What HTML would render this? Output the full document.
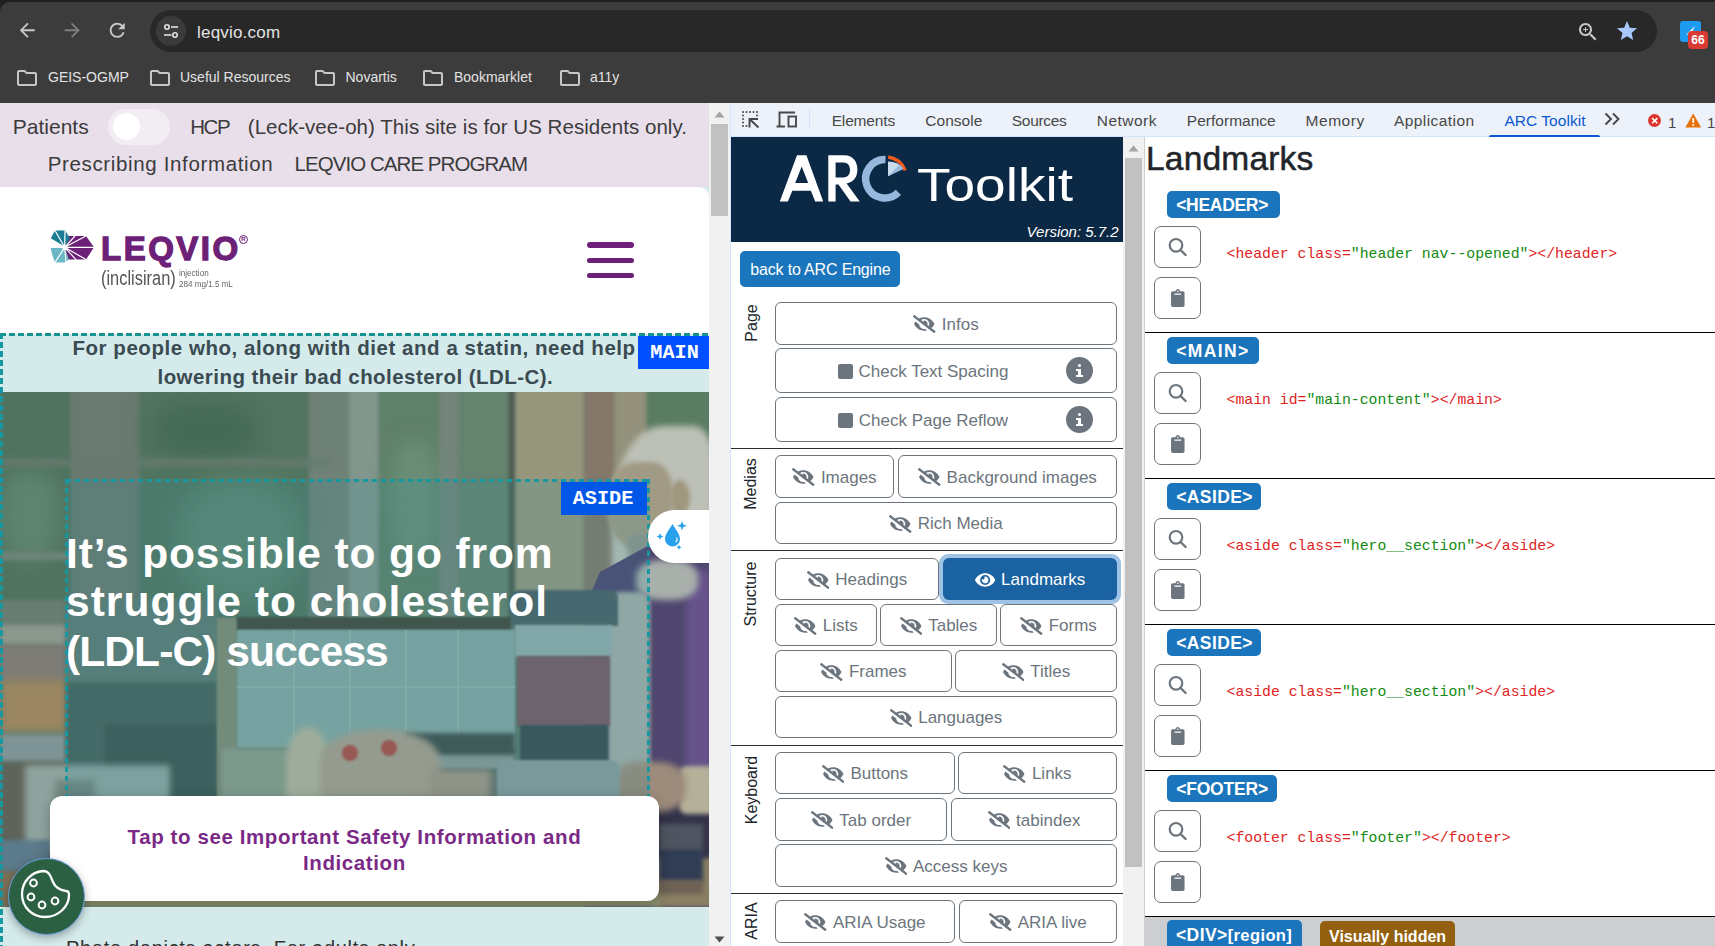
<!DOCTYPE html>
<html><head><meta charset="utf-8"><title>leqvio.com - ARC Toolkit</title>
<style>html,body{margin:0;padding:0;width:1715px;height:946px;overflow:hidden;position:relative;background:#fff;font-family:'Liberation Sans',sans-serif}</style>
</head><body>
<div style="position:absolute;left:0;top:0;width:1715px;height:103px;background:#1f2020"></div>
<div style="position:absolute;left:0;top:2px;width:1715px;height:101px;background:#3c3c3c;border-top-left-radius:10px"></div>
<div style="position:absolute;left:150px;top:10px;width:1507px;height:42px;border-radius:21px;background:#282828"></div>
<div style="position:absolute;left:156px;top:16px;width:30px;height:30px;border-radius:15px;background:#3b3b3b"></div>
<svg style="position:absolute;left:163px;top:23px" width="16" height="16" viewBox="0 0 16 16">
<circle cx="4" cy="4" r="2.2" fill="none" stroke="#e3e3e3" stroke-width="1.6"/><line x1="8" y1="4" x2="15" y2="4" stroke="#e3e3e3" stroke-width="1.6"/>
<circle cx="12" cy="12" r="2.2" fill="none" stroke="#e3e3e3" stroke-width="1.6"/><line x1="1" y1="12" x2="8.5" y2="12" stroke="#e3e3e3" stroke-width="1.6"/></svg>
<div style="position:absolute;left:197px;top:21px;font:17px/24px 'Liberation Sans',sans-serif;color:#e3e3e3;white-space:nowrap;letter-spacing:0.2px">leqvio.com</div>
<svg style="position:absolute;left:16px;top:19px" width="22.5" height="22.5" viewBox="0 0 24 24"><path d="M20 11H7.83l5.59-5.59L12 4l-8 8 8 8 1.41-1.41L7.83 13H20v-2z" fill="#c7c7c7"/></svg>
<svg style="position:absolute;left:61px;top:19px;transform:scaleX(-1)" width="22.5" height="22.5" viewBox="0 0 24 24"><path d="M20 11H7.83l5.59-5.59L12 4l-8 8 8 8 1.41-1.41L7.83 13H20v-2z" fill="#7d7d7d"/></svg>
<svg style="position:absolute;left:106px;top:19px" width="22.5" height="22.5" viewBox="0 0 24 24"><path d="M17.65 6.35C16.2 4.9 14.21 4 12 4c-4.42 0-7.99 3.58-7.99 8s3.57 8 7.99 8c3.73 0 6.84-2.55 7.73-6h-2.08c-.82 2.33-3.04 4-5.65 4-3.31 0-6-2.69-6-6s2.69-6 6-6c1.66 0 3.14.69 4.22 1.78L13 11h7V4l-2.35 2.35z" fill="#c7c7c7"/></svg>
<svg style="position:absolute;left:1575.5px;top:20px" width="24" height="24" viewBox="0 0 24 24"><path d="M15.5 14h-.79l-.28-.27C15.41 12.59 16 11.11 16 9.5 16 5.91 13.09 3 9.5 3S3 5.91 3 9.5 5.91 16 9.5 16c1.61 0 3.09-.59 4.23-1.57l.27.28v.79l5 4.99L20.49 19l-4.99-5zm-6 0C7.01 14 5 11.99 5 9.5S7.01 5 9.5 5 14 7.01 14 9.5 11.99 14 9.5 14zm2.5-4h-2v2H9v-2H7V9h2V7h1v2h2v1z" fill="#c7c7c7"/></svg>
<svg style="position:absolute;left:1615px;top:19px" width="24" height="24" viewBox="0 0 24 24"><path d="M12 17.27L18.18 21l-1.64-7.03L22 9.24l-7.19-.61L12 2 9.19 8.63 2 9.24l5.46 4.73L5.82 21z" fill="#a8c7fa"/></svg>
<div style="position:absolute;left:1680px;top:21px;width:21px;height:21px;border-radius:3px;background:#1d9bf0"></div>
<svg style="position:absolute;left:1684px;top:25px" width="12" height="12" viewBox="0 0 12 12"><path d="M11 1L2 10l3-1 1 2z" fill="#fff"/></svg>
<div style="position:absolute;left:1688px;top:31px;width:20px;height:18px;border-radius:4px;background:#d93a34;font:bold 12px/19px 'Liberation Sans',sans-serif;color:#fff;text-align:center">66</div>
<svg style="position:absolute;left:15px;top:66px" width="24" height="24" viewBox="0 0 24 24"><path d="M9.17 6l2 2H20v10H4V6h5.17M10 4H4c-1.1 0-1.99.9-1.99 2L2 18c0 1.1.9 2 2 2h16c1.1 0 2-.9 2-2V8c0-1.1-.9-2-2-2h-8l-2-2z" fill="#c7c7c7"/></svg>
<div style="position:absolute;left:48px;top:68px;font:14px/18px 'Liberation Sans',sans-serif;color:#e3e3e3;white-space:nowrap">GEIS-OGMP</div>
<svg style="position:absolute;left:148px;top:66px" width="24" height="24" viewBox="0 0 24 24"><path d="M9.17 6l2 2H20v10H4V6h5.17M10 4H4c-1.1 0-1.99.9-1.99 2L2 18c0 1.1.9 2 2 2h16c1.1 0 2-.9 2-2V8c0-1.1-.9-2-2-2h-8l-2-2z" fill="#c7c7c7"/></svg>
<div style="position:absolute;left:180px;top:68px;font:14px/18px 'Liberation Sans',sans-serif;color:#e3e3e3;white-space:nowrap">Useful Resources</div>
<svg style="position:absolute;left:313px;top:66px" width="24" height="24" viewBox="0 0 24 24"><path d="M9.17 6l2 2H20v10H4V6h5.17M10 4H4c-1.1 0-1.99.9-1.99 2L2 18c0 1.1.9 2 2 2h16c1.1 0 2-.9 2-2V8c0-1.1-.9-2-2-2h-8l-2-2z" fill="#c7c7c7"/></svg>
<div style="position:absolute;left:345.5px;top:68px;font:14px/18px 'Liberation Sans',sans-serif;color:#e3e3e3;white-space:nowrap">Novartis</div>
<svg style="position:absolute;left:421px;top:66px" width="24" height="24" viewBox="0 0 24 24"><path d="M9.17 6l2 2H20v10H4V6h5.17M10 4H4c-1.1 0-1.99.9-1.99 2L2 18c0 1.1.9 2 2 2h16c1.1 0 2-.9 2-2V8c0-1.1-.9-2-2-2h-8l-2-2z" fill="#c7c7c7"/></svg>
<div style="position:absolute;left:454px;top:68px;font:14px/18px 'Liberation Sans',sans-serif;color:#e3e3e3;white-space:nowrap">Bookmarklet</div>
<svg style="position:absolute;left:558px;top:66px" width="24" height="24" viewBox="0 0 24 24"><path d="M9.17 6l2 2H20v10H4V6h5.17M10 4H4c-1.1 0-1.99.9-1.99 2L2 18c0 1.1.9 2 2 2h16c1.1 0 2-.9 2-2V8c0-1.1-.9-2-2-2h-8l-2-2z" fill="#c7c7c7"/></svg>
<div style="position:absolute;left:590px;top:68px;font:14px/18px 'Liberation Sans',sans-serif;color:#e3e3e3;white-space:nowrap">a11y</div>
<div style="position:absolute;left:0px;top:103px;width:709px;height:843px;background:#d4eaeb"></div>
<div style="position:absolute;left:0px;top:103px;width:709px;height:84px;background:#e9dfeb"></div>
<div style="position:absolute;left:12.8px;top:116.2px;font:normal 21px/21px 'Liberation Sans',sans-serif;color:#3b3b3b;white-space:nowrap;">Patients</div>
<div style="position:absolute;left:108px;top:108.5px;width:62px;height:36px;background:#f2ecf3;border-radius:18px"></div>
<div style="position:absolute;left:112.8px;top:113px;width:27px;height:27px;background:#fff;border-radius:50%"></div>
<div style="position:absolute;left:190.3px;top:116.6px;font:normal 20.5px/20.5px 'Liberation Sans',sans-serif;color:#3b3b3b;white-space:nowrap;letter-spacing:-1.5px">HCP</div>
<div style="position:absolute;left:247.8px;top:116.6px;font:normal 20.5px/20.5px 'Liberation Sans',sans-serif;color:#3b3b3b;white-space:nowrap;letter-spacing:0.05px">(Leck-vee-oh) This site is for US Residents only.</div>
<div style="position:absolute;left:47.7px;top:154.1px;font:normal 20.5px/20.5px 'Liberation Sans',sans-serif;color:#3b3b3b;white-space:nowrap;letter-spacing:0.65px">Prescribing Information</div>
<div style="position:absolute;left:294.6px;top:154.1px;font:normal 20.5px/20.5px 'Liberation Sans',sans-serif;color:#3b3b3b;white-space:nowrap;letter-spacing:-0.95px">LEQVIO CARE PROGRAM</div>
<div style="position:absolute;left:0px;top:187px;width:709px;height:147px;background:#fff;border-radius:0 10px 0 0"></div>
<svg style="position:absolute;left:48px;top:228px" width="48" height="36" viewBox="48 228 48 36">
<path d="M66 236 L86 236 L94 247.3 L86 259.6 L66 259.6 L64.7 247.3z" fill="#6d2077"/>
<path d="M55 230.5 L65 230.5 L70 238 L64.7 247.3 L50.5 238.8z" fill="#1b7d95"/>
<path d="M50.5 247.3 L64.7 247.3 L69 259.6 L64.7 262.5 L55 262.5 L52 254z" fill="#6ab8c6"/>
<g stroke="#fff" stroke-width="1.2"><path d="M64.7 247.3L50.5 238.8M64.7 247.3L55 230.5M64.7 247.3L65 230.5M64.7 247.3L86 236M64.7 247.3L94 247.3M64.7 247.3L86 259.6M64.7 247.3L66 262M64.7 247.3L55 262.5M64.7 247.3L50.5 247.3M64.7 247.3L75 236M64.7 247.3L76 259.6"/></g>
<circle cx="64.7" cy="247.3" r="2.6" fill="#fff"/></svg>
<div style="position:absolute;left:101.0px;top:231.7px;font:bold 33px/33px 'Liberation Sans',sans-serif;color:#6d2077;white-space:nowrap;letter-spacing:2.5px;-webkit-text-stroke:1.3px #6d2077">LEQVIO</div>
<div style="position:absolute;left:239px;top:235px;width:9px;height:9px;border-radius:50%;border:1.3px solid #6d2077;box-sizing:border-box;font:bold 6px/6.4px 'Liberation Sans';color:#6d2077;text-align:center">R</div>
<div style="position:absolute;left:101.0px;top:268.1px;font:normal 20px/20px 'Liberation Sans',sans-serif;color:#555;white-space:nowrap;transform:scaleX(0.82);transform-origin:0 0">(inclisiran)</div>
<div style="position:absolute;left:179.0px;top:267.5px;font:normal 9.5px/9.5px 'Liberation Sans',sans-serif;color:#666;white-space:nowrap;transform:scaleX(0.85);transform-origin:0 0">injection</div>
<div style="position:absolute;left:179.0px;top:279.0px;font:normal 9.5px/9.5px 'Liberation Sans',sans-serif;color:#666;white-space:nowrap;transform:scaleX(0.85);transform-origin:0 0">284 mg/1.5 mL</div>
<div style="position:absolute;left:587px;top:242px;width:47px;height:5.5px;background:#6d2077;border-radius:3px"></div>
<div style="position:absolute;left:587px;top:257.5px;width:47px;height:5.5px;background:#6d2077;border-radius:3px"></div>
<div style="position:absolute;left:587px;top:272.5px;width:47px;height:5.5px;background:#6d2077;border-radius:3px"></div>
<div style="position:absolute;left:0px;top:336px;width:709px;height:56px;background:#d4eaeb"></div>
<div style="position:absolute;left:72.4px;top:337.6px;font:bold 20.5px/20.5px 'Liberation Sans',sans-serif;color:#3a4b52;white-space:nowrap;letter-spacing:0.55px">For people who, along with diet and a statin, need help</div>
<div style="position:absolute;left:157.5px;top:366.6px;font:bold 20.5px/20.5px 'Liberation Sans',sans-serif;color:#3a4b52;white-space:nowrap;letter-spacing:0.45px">lowering their bad cholesterol (LDL-C).</div>
<div style="position:absolute;left:0;top:392px;width:709px;height:515px;overflow:hidden;background:#5f7d6e">
<div style="position:absolute;left:-1px;top:-12px;width:74px;height:245px;background:#4f735f;border-radius:0;filter:blur(2px);"></div>
<div style="position:absolute;left:71px;top:-12px;width:70px;height:245px;background:#6b7a70;border-radius:0;filter:blur(2px);"></div>
<div style="position:absolute;left:139px;top:-12px;width:172px;height:245px;background:#527561;border-radius:0;filter:blur(2px);"></div>
<div style="position:absolute;left:309px;top:-12px;width:42px;height:245px;background:#6f8277;border-radius:0;filter:blur(2px);"></div>
<div style="position:absolute;left:349px;top:-12px;width:32px;height:245px;background:#82968d;border-radius:0;filter:blur(2px);"></div>
<div style="position:absolute;left:379px;top:-12px;width:62px;height:245px;background:#5f8069;border-radius:0;filter:blur(2px);"></div>
<div style="position:absolute;left:439px;top:-12px;width:22px;height:245px;background:#74857b;border-radius:0;filter:blur(2px);"></div>
<div style="position:absolute;left:459px;top:-12px;width:52px;height:245px;background:#66836f;border-radius:0;filter:blur(2px);"></div>
<div style="position:absolute;left:509px;top:-12px;width:8px;height:245px;background:#48584e;border-radius:0;filter:blur(2px);"></div>
<div style="position:absolute;left:515px;top:-12px;width:71px;height:245px;background:#96967d;border-radius:0;filter:blur(2px);"></div>
<div style="position:absolute;left:584px;top:-12px;width:32px;height:245px;background:#85776a;border-radius:0;filter:blur(2px);"></div>
<div style="position:absolute;left:614px;top:-12px;width:35px;height:245px;background:#93917b;border-radius:0;filter:blur(2px);"></div>
<div style="position:absolute;left:647px;top:-12px;width:63px;height:245px;background:#5a7d62;border-radius:0;filter:blur(2px);"></div>
<div style="position:absolute;left:150px;top:8px;width:110px;height:60px;background:#456b56;border-radius:40%;filter:blur(12px);"></div>
<div style="position:absolute;left:0px;top:78px;width:60px;height:90px;background:#5d8470;border-radius:40%;filter:blur(10px);"></div>
<div style="position:absolute;left:180px;top:88px;width:120px;height:120px;background:#5f8672;border-radius:40%;filter:blur(14px);"></div>
<div style="position:absolute;left:390px;top:48px;width:50px;height:120px;background:#6a8d77;border-radius:40%;filter:blur(10px);"></div>
<div style="position:absolute;left:0px;top:67px;width:330px;height:7px;background:#667b70;border-radius:0;filter:blur(3px);"></div>
<div style="position:absolute;left:0px;top:160px;width:72px;height:8px;background:#6f8479;border-radius:0;filter:blur(2px);"></div>
<div style="position:absolute;left:0px;top:208px;width:66px;height:28px;background:#687d72;border-radius:0;filter:blur(2px);"></div>
<div style="position:absolute;left:0px;top:233px;width:66px;height:20px;background:#8b978d;border-radius:0;filter:blur(2px);"></div>
<div style="position:absolute;left:0px;top:253px;width:66px;height:37px;background:#7d7c76;border-radius:0;filter:blur(2px);"></div>
<div style="position:absolute;left:0px;top:288px;width:68px;height:52px;background:#9a8660;border-radius:0;filter:blur(4px);"></div>
<div style="position:absolute;left:0px;top:343px;width:66px;height:27px;background:#7f9497;border-radius:0;filter:blur(2px);"></div>
<div style="position:absolute;left:0px;top:370px;width:66px;height:145px;background:#5e645a;border-radius:0;filter:blur(2px);"></div>
<div style="position:absolute;left:66px;top:208px;width:151px;height:82px;background:#5f7b74;border-radius:0;filter:blur(2px);"></div>
<div style="position:absolute;left:66px;top:290px;width:151px;height:118px;background:#4a625c;border-radius:0;filter:blur(2px);"></div>
<div style="position:absolute;left:105px;top:333px;width:112px;height:75px;background:#3f5650;border-radius:0;filter:blur(2px);"></div>
<div style="position:absolute;left:217px;top:226px;width:20px;height:182px;background:#838a74;border-radius:0;filter:blur(1px);"></div>
<div style="position:absolute;left:237px;top:225px;width:274px;height:13px;background:#464b3e;border-radius:0;filter:blur(1px);"></div>
<div style="position:absolute;left:237px;top:238px;width:278px;height:118px;background:#86a6a2;border-radius:0;filter:blur(1px);"></div>
<div style="position:absolute;left:293px;top:238px;width:2px;height:110px;background:#93aeaa;border-radius:0;"></div>
<div style="position:absolute;left:349px;top:238px;width:2px;height:110px;background:#93aeaa;border-radius:0;"></div>
<div style="position:absolute;left:405px;top:238px;width:2px;height:110px;background:#93aeaa;border-radius:0;"></div>
<div style="position:absolute;left:457px;top:238px;width:2px;height:110px;background:#93aeaa;border-radius:0;"></div>
<div style="position:absolute;left:237px;top:294px;width:278px;height:2px;background:#93aeaa;border-radius:0;"></div>
<div style="position:absolute;left:222px;top:356px;width:78px;height:52px;background:#8d9a88;border-radius:0;filter:blur(2px);"></div>
<div style="position:absolute;left:405px;top:341px;width:110px;height:39px;background:#43504d;border-radius:0;filter:blur(2px);"></div>
<div style="position:absolute;left:405px;top:363px;width:110px;height:15px;background:#8b9895;border-radius:0;filter:blur(2px);"></div>
<div style="position:absolute;left:405px;top:380px;width:110px;height:28px;background:#6d736a;border-radius:0;filter:blur(2px);"></div>
<div style="position:absolute;left:25px;top:373px;width:145px;height:87px;background:#8fa49f;border-radius:0;filter:blur(3px);"></div>
<div style="position:absolute;left:55px;top:388px;width:40px;height:70px;background:#72857f;border-radius:0;filter:blur(3px);"></div>
<div style="position:absolute;left:0px;top:448px;width:50px;height:32px;background:#5b7a8a;border-radius:0;filter:blur(2px);"></div>
<div style="position:absolute;left:0px;top:480px;width:50px;height:35px;background:#7d7058;border-radius:0;filter:blur(2px);"></div>
<div style="position:absolute;left:286px;top:335px;width:44px;height:73px;background:#b6b39a;border-radius:50% 50% 0 0;filter:blur(3px);"></div>
<div style="position:absolute;left:320px;top:338px;width:120px;height:70px;background:#ab9d8b;border-radius:45% 45% 10% 10%;filter:blur(3px);"></div>
<div style="position:absolute;left:430px;top:378px;width:60px;height:30px;background:#a39482;border-radius:0;filter:blur(3px);"></div>
<div style="position:absolute;left:342px;top:353px;width:16px;height:16px;background:#b04c44;border-radius:50%;filter:blur(1px);"></div>
<div style="position:absolute;left:381px;top:348px;width:16px;height:16px;background:#b04c44;border-radius:50%;filter:blur(1px);"></div>
<div style="position:absolute;left:612px;top:34px;width:102px;height:174px;background:#bcc0b6;border-radius:50% 20% 0 0;filter:blur(3px);"></div>
<div style="position:absolute;left:606px;top:70px;width:66px;height:88px;background:#a19a84;border-radius:45% 30% 40% 50%;filter:blur(2px);"></div>
<div style="position:absolute;left:670px;top:88px;width:20px;height:35px;background:#a0977f;border-radius:50%;filter:blur(2px);"></div>
<div style="position:absolute;left:628px;top:143px;width:62px;height:60px;background:#8f948d;border-radius:0;filter:blur(3px);"></div>
<div style="position:absolute;left:0;top:0;width:709px;height:515px;background:#4f466f;clip-path:polygon(655px 150px,700px 165px,720px 175px,720px 515px,585px 515px,585px 215px,600px 180px)"></div>
<div style="position:absolute;left:686px;top:178px;width:26px;height:210px;background:#66538a;border-radius:0;filter:blur(3px);"></div>
<div style="position:absolute;left:608px;top:200px;width:42px;height:198px;background:#a5aca7;border-radius:12px 12px 0 0;filter:blur(2px);"></div>
<div style="position:absolute;left:636px;top:168px;width:62px;height:40px;background:#a9b0ab;border-radius:40%;filter:blur(3px);"></div>
<div style="position:absolute;left:650px;top:398px;width:62px;height:80px;background:#34334a;border-radius:0;filter:blur(2px);"></div>
<div style="position:absolute;left:679px;top:374px;width:33px;height:48px;background:#b5b09a;border-radius:8px 0 0 8px;filter:blur(2px);"></div>
<div style="position:absolute;left:616px;top:370px;width:70px;height:50px;background:#9d8c7b;border-radius:30% 40% 40% 30%;filter:blur(3px);"></div>
<div style="position:absolute;left:511px;top:198px;width:107px;height:36px;background:#4e6064;border-radius:8px 8px 0 0;filter:blur(1px);"></div>
<div style="position:absolute;left:515px;top:233px;width:97px;height:32px;background:#95abab;border-radius:0;filter:blur(1px);"></div>
<div style="position:absolute;left:517px;top:264px;width:93px;height:70px;background:#7a5a63;border-radius:0;filter:blur(1px);"></div>
<div style="position:absolute;left:520px;top:333px;width:88px;height:37px;background:#3d4d51;border-radius:0;filter:blur(1px);"></div>
<div style="position:absolute;left:497px;top:368px;width:123px;height:38px;background:#8a9b9a;border-radius:10px 10px 0 0;filter:blur(1px);"></div>
<div style="position:absolute;left:655px;top:466px;width:57px;height:49px;background:#8a7f63;border-radius:0;filter:blur(2px);"></div>
<div style="position:absolute;left:659px;top:432px;width:44px;height:28px;background:#4f5560;border-radius:0;filter:blur(2px);"></div>
<div style="position:absolute;left:659px;top:458px;width:44px;height:32px;background:#303d55;border-radius:0;filter:blur(2px);"></div>
<div style="position:absolute;left:659px;top:488px;width:44px;height:14px;background:#6d6255;border-radius:0;filter:blur(2px);"></div>
<div style="position:absolute;left:50px;top:503px;width:610px;height:12px;background:#8c9570;border-radius:0;filter:blur(2px);"></div>
</div>
<div style="position:absolute;left:66px;top:479px;width:584px;height:317px;background:rgba(40,150,160,0.17)"></div>
<div style="position:absolute;left:66.0px;top:533.0px;font:bold 42.5px/42.5px 'Liberation Sans',sans-serif;color:#fff;white-space:nowrap;letter-spacing:0.9px">It&rsquo;s possible to go from</div>
<div style="position:absolute;left:66.0px;top:581.0px;font:bold 42.5px/42.5px 'Liberation Sans',sans-serif;color:#fff;white-space:nowrap;letter-spacing:1.04px">struggle to cholesterol</div>
<div style="position:absolute;left:66.0px;top:630.5px;font:bold 42.5px/42.5px 'Liberation Sans',sans-serif;color:#fff;white-space:nowrap;letter-spacing:-0.9px">(LDL-C) success</div>
<div style="position:absolute;left:0px;top:333px;width:709px;height:3px;background:repeating-linear-gradient(90deg,#17938f 0 6px,transparent 6px 9px)"></div>
<div style="position:absolute;left:0px;top:333px;width:3px;height:613px;background:repeating-linear-gradient(180deg,#17979f 0 6px,transparent 6px 9px)"></div>
<div style="position:absolute;left:66px;top:479px;width:584px;height:2.5px;background:repeating-linear-gradient(90deg,#17979f 0 5px,transparent 5px 9px)"></div>
<div style="position:absolute;left:647px;top:479px;width:3px;height:317px;background:repeating-linear-gradient(180deg,#17979f 0 5px,transparent 5px 9px)"></div>
<div style="position:absolute;left:65px;top:479px;width:2.5px;height:317px;background:repeating-linear-gradient(180deg,#17979f 0 5px,transparent 5px 9px)"></div>
<div style="position:absolute;left:638px;top:336px;width:71px;height:33px;background:#0050ff"></div>
<div style="position:absolute;left:650.3px;top:342.5px;font:bold 20.2px/20.2px 'Liberation Mono',monospace;color:#fff;white-space:nowrap;">MAIN</div>
<div style="position:absolute;left:561px;top:482px;width:86px;height:33px;background:#0057e7"></div>
<div style="position:absolute;left:572.7px;top:488.5px;font:bold 20.2px/20.2px 'Liberation Mono',monospace;color:#fff;white-space:nowrap;">ASIDE</div>
<div style="position:absolute;left:648px;top:510px;width:61px;height:53px;background:#fff;border-radius:26.5px 0 0 26.5px"></div>
<svg style="position:absolute;left:653px;top:520px" width="40" height="34" viewBox="0 0 40 34">
<path d="M19.5 4 C16 10 12 14 12 19 A7.5 7.5 0 0 0 27 19 C27 14 23 10 19.5 4z" fill="#28a0ec"/>
<path d="M23.5 17.5 A3 3 0 0 1 22.5 22" stroke="#fff" stroke-width="1.2" fill="none"/>
<path d="M7 13 L8 15.5 10.5 16.5 8 17.5 7 20 6 17.5 3.5 16.5 6 15.5z" fill="#28a0ec"/>
<path d="M29 1 L30.3 4.5 34 5.8 30.3 7.1 29 10.6 27.7 7.1 24 5.8 27.7 4.5z" fill="#28a0ec"/>
<path d="M26 24.5 L26.8 26.4 28.7 27.2 26.8 28 26 29.9 25.2 28 23.3 27.2 25.2 26.4z" fill="#28a0ec"/></svg>
<div style="position:absolute;left:50px;top:796px;width:609px;height:105px;background:#fff;border-radius:12px;box-shadow:0 4px 14px rgba(0,0,0,0.25)"></div>
<div style="position:absolute;left:-145.6px;width:1000px;text-align:center;top:826.6px;font:bold 20.5px/20.5px 'Liberation Sans',sans-serif;color:#7a2a86;white-space:nowrap;letter-spacing:0.6px">Tap to see Important Safety Information and</div>
<div style="position:absolute;left:-145.6px;width:1000px;text-align:center;top:852.9px;font:bold 20.5px/20.5px 'Liberation Sans',sans-serif;color:#7a2a86;white-space:nowrap;letter-spacing:0.6px">Indication</div>
<div style="position:absolute;left:3px;top:907px;width:706px;height:39px;background:#d4eaeb"></div>
<div style="position:absolute;left:66.0px;top:938.1px;font:normal 20px/20px 'Liberation Sans',sans-serif;color:#333;white-space:nowrap;letter-spacing:0.7px">Photo depicts actors. For adults only.</div>
<div style="position:absolute;left:7.5px;top:857.5px;width:77px;height:77px;background:#2b6043;border-radius:50%;box-sizing:border-box;border:1px solid #6aa0dd;box-shadow:0 3px 8px rgba(0,0,0,0.3)"></div>
<svg style="position:absolute;left:19px;top:868px" width="55" height="55" viewBox="0 0 55 55">
<path d="M24 3 C12 4 3 14 3 26 C3 39 13 49 26 49 C39 49 50 39 50 27 C50 25 49 23 47 23 C41 22 36 19 34 14 C32 10 31 3 24 3z" stroke="#fff" stroke-width="2.3" fill="none"/>
<circle cx="14.5" cy="15" r="3.4" stroke="#fff" stroke-width="2" fill="none"/>
<circle cx="12" cy="29" r="3.4" stroke="#fff" stroke-width="2" fill="none"/>
<circle cx="23" cy="37" r="3.4" stroke="#fff" stroke-width="2" fill="none"/>
<circle cx="36" cy="33" r="3.4" stroke="#fff" stroke-width="2" fill="none"/></svg>
<div style="position:absolute;left:709px;top:103px;width:21px;height:843px;background:#f1f1f1"></div>
<div style="position:absolute;left:711px;top:124px;width:17px;height:92px;background:#c1c1c1"></div>
<svg style="position:absolute;left:714px;top:111px" width="11" height="7" viewBox="0 0 11 7"><path d="M0.5 6.5L5.5 0.5 10.5 6.5z" fill="#a3a3a3"/></svg>
<svg style="position:absolute;left:714px;top:936px" width="11" height="7" viewBox="0 0 11 7"><path d="M0.5 0.5L5.5 6.5 10.5 0.5z" fill="#505050"/></svg>
<div style="position:absolute;left:730px;top:103px;width:985px;height:34px;background:#edf2fa"></div>
<div style="position:absolute;left:730px;top:136px;width:985px;height:1px;background:#d3e3fd"></div>
<div style="position:absolute;left:730px;top:103px;width:1px;height:843px;background:#d3e3fd"></div>
<svg style="position:absolute;left:742px;top:111px" width="18" height="18" viewBox="0 0 18 18">
<g fill="#474747"><circle cx="1" cy="1" r="1"/><circle cx="4.5" cy="1" r="1"/><circle cx="8" cy="1" r="1"/><circle cx="11.5" cy="1" r="1"/><circle cx="15" cy="1" r="1"/>
<circle cx="1" cy="4.5" r="1"/><circle cx="1" cy="8" r="1"/><circle cx="1" cy="11.5" r="1"/><circle cx="1" cy="15" r="1"/><circle cx="4.5" cy="15" r="1"/><circle cx="15" cy="4.5" r="1"/></g>
<path d="M7.5 16.5V8H16M8 8.5l8.5 8" stroke="#474747" stroke-width="1.9" fill="none"/></svg>
<svg style="position:absolute;left:776px;top:111px" width="22" height="17" viewBox="0 0 22 17">
<path d="M3.5 15V1.5H19" stroke="#474747" stroke-width="1.9" fill="none"/><path d="M0.5 15.5H9" stroke="#474747" stroke-width="2" fill="none"/>
<rect x="12.5" y="5.5" width="7.5" height="10" stroke="#474747" stroke-width="1.9" fill="none"/></svg>
<div style="position:absolute;left:809px;top:109px;width:1px;height:19px;background:#d3e3fd"></div>
<div style="position:absolute;left:831.7px;top:112.9px;font:normal 15.5px/15.5px 'Liberation Sans',sans-serif;color:#474747;white-space:nowrap;letter-spacing:-0.16px">Elements</div>
<div style="position:absolute;left:925.3px;top:112.9px;font:normal 15.5px/15.5px 'Liberation Sans',sans-serif;color:#474747;white-space:nowrap;letter-spacing:0.03px">Console</div>
<div style="position:absolute;left:1011.8px;top:112.9px;font:normal 15.5px/15.5px 'Liberation Sans',sans-serif;color:#474747;white-space:nowrap;letter-spacing:-0.3px">Sources</div>
<div style="position:absolute;left:1096.7px;top:112.9px;font:normal 15.5px/15.5px 'Liberation Sans',sans-serif;color:#474747;white-space:nowrap;letter-spacing:0.5px">Network</div>
<div style="position:absolute;left:1186.8px;top:112.9px;font:normal 15.5px/15.5px 'Liberation Sans',sans-serif;color:#474747;white-space:nowrap;letter-spacing:0.02px">Performance</div>
<div style="position:absolute;left:1305.5px;top:112.9px;font:normal 15.5px/15.5px 'Liberation Sans',sans-serif;color:#474747;white-space:nowrap;letter-spacing:0.55px">Memory</div>
<div style="position:absolute;left:1394.0px;top:112.9px;font:normal 15.5px/15.5px 'Liberation Sans',sans-serif;color:#474747;white-space:nowrap;letter-spacing:0.43px">Application</div>
<div style="position:absolute;left:1504.4px;top:112.9px;font:normal 15.5px/15.5px 'Liberation Sans',sans-serif;color:#0b57d0;white-space:nowrap;letter-spacing:0.04px">ARC Toolkit</div>
<div style="position:absolute;left:1489px;top:134.5px;width:110.5px;height:2.5px;background:#0b57d0;border-radius:2px 2px 0 0"></div>
<svg style="position:absolute;left:1604px;top:112px" width="17" height="14" viewBox="0 0 17 14"><path d="M1.5 1.5L7 7l-5.5 5.5M9 1.5L14.5 7 9 12.5" stroke="#474747" stroke-width="1.9" fill="none"/></svg>
<div style="position:absolute;left:1647.8px;top:113.7px;width:13.4px;height:13.4px;border-radius:50%;background:#dc362e"></div>
<svg style="position:absolute;left:1647.8px;top:113.7px" width="13.4" height="13.4" viewBox="0 0 14 14"><path d="M4.3 4.3l5.4 5.4M9.7 4.3l-5.4 5.4" stroke="#fff" stroke-width="1.7"/></svg>
<div style="position:absolute;left:1668.0px;top:115.3px;font:normal 15px/15px 'Liberation Sans',sans-serif;color:#474747;white-space:nowrap;">1</div>
<svg style="position:absolute;left:1684.5px;top:113px" width="16.5" height="15" viewBox="0 0 16.5 15"><path d="M8.25 0.5L16.2 14.5H0.3z" fill="#e8710a"/><rect x="7.4" y="5" width="1.7" height="5" fill="#fff"/><rect x="7.4" y="11.2" width="1.7" height="1.7" fill="#fff"/></svg>
<div style="position:absolute;left:1707.0px;top:115.3px;font:normal 15px/15px 'Liberation Sans',sans-serif;color:#474747;white-space:nowrap;">1</div>
<div style="position:absolute;left:731px;top:137px;width:392px;height:809px;background:#fff"></div>
<div style="position:absolute;left:731px;top:137px;width:392px;height:105px;background:#0b2945"></div>
<svg style="position:absolute;left:731px;top:137px" width="392" height="105" viewBox="731 137 392 105">
<path fill="#fff" fill-rule="evenodd" d="M779.8 201.4 L797 155.3 L806.4 155.3 L823.2 201.4 L815.2 201.4 L810.9 190.7 L792.3 190.7 L787.9 201.4z M795.2 183 L808.2 183 L801.7 166.5z"/>
<path fill="#fff" fill-rule="evenodd" d="M828.3 201.4 L828.3 155.3 L844 155.3 C853 155.3 857.4 161.5 857.4 169.8 C857.4 177 853.5 182.2 846.6 183.6 L859.8 201.4 L850.5 201.4 L838.5 184.4 L835.6 184.4 L835.6 201.4z M835.6 162.6 L835.6 177.4 L843.5 177.4 C847.8 177.4 850 174.4 850 170 C850 165.6 847.8 162.6 843.5 162.6z"/>
<path d="M885.5 159.6 A19.2 19.2 0 1 0 898.4 192.4" stroke="#95b8dc" stroke-width="7.5" fill="none"/>
<path d="M888.2 157 A22 22 0 0 1 905.2 170.4" stroke="#f05a1a" stroke-width="3.3" fill="none"/>
<path d="M888 161.5 L888 176.2 L903.4 168.8 A19 19 0 0 0 888 161.5z" fill="#c9dcef"/>
<path d="M888 176.2 L903.4 168.8 L900 164.5z" fill="#95b8dc"/>
<text x="917" y="200.8" font-family="Liberation Sans" font-size="47" fill="#fff" textLength="156" lengthAdjust="spacingAndGlyphs">Toolkit</text>
</svg>
<div style="position:absolute;left:1026.6px;top:224.2px;font:italic normal 15px/15px 'Liberation Sans',sans-serif;color:#fff;white-space:nowrap;width:93px">Version: 5.7.2</div>
<div style="position:absolute;left:740px;top:251px;width:160px;height:36px;background:#1b75bc;border-radius:5px"></div>
<div style="position:absolute;left:750.3px;top:262.0px;font:normal 16px/16px 'Liberation Sans',sans-serif;color:#fff;white-space:nowrap;letter-spacing:-0.17px">back to ARC Engine</div>
<div style="position:absolute;left:731px;top:448px;width:392px;height:1px;background:#2c2c2c"></div>
<div style="position:absolute;left:731px;top:550px;width:392px;height:1px;background:#2c2c2c"></div>
<div style="position:absolute;left:731px;top:745px;width:392px;height:1px;background:#2c2c2c"></div>
<div style="position:absolute;left:731px;top:893px;width:392px;height:1px;background:#2c2c2c"></div>
<div style="position:absolute;left:652px;top:313px;width:200px;height:20px;text-align:center;font:16px/20px 'Liberation Sans',sans-serif;color:#212529;transform:rotate(-90deg);white-space:nowrap">Page</div>
<div style="position:absolute;left:651px;top:474px;width:200px;height:20px;text-align:center;font:16px/20px 'Liberation Sans',sans-serif;color:#212529;transform:rotate(-90deg);white-space:nowrap">Medias</div>
<div style="position:absolute;left:651px;top:584px;width:200px;height:20px;text-align:center;font:16px/20px 'Liberation Sans',sans-serif;color:#212529;transform:rotate(-90deg);white-space:nowrap">Structure</div>
<div style="position:absolute;left:652px;top:780px;width:200px;height:20px;text-align:center;font:16px/20px 'Liberation Sans',sans-serif;color:#212529;transform:rotate(-90deg);white-space:nowrap">Keyboard</div>
<div style="position:absolute;left:652px;top:911px;width:200px;height:20px;text-align:center;font:16px/20px 'Liberation Sans',sans-serif;color:#212529;transform:rotate(-90deg);white-space:nowrap">ARIA</div>
<div style="position:absolute;left:775px;top:302px;width:340px;height:41px;border:1px solid #6c757d;border-radius:6px;background:#fff"></div>
<div style="position:absolute;left:775px;top:302px;width:342px;height:43px;display:flex;align-items:center;justify-content:center;color:#6c757d;font:17px/1 'Liberation Sans',sans-serif;letter-spacing:0px;white-space:nowrap">
<svg width="22.5" height="18" viewBox="0 0 640 512" style="margin-right:6px;margin-top:1px"><path d="M320 400c-75.85 0-137.25-58.71-142.9-133.11L72.2 185.82c-13.79 17.3-26.48 35.59-36.72 55.59a32.35 32.35 0 0 0 0 29.19C89.71 376.41 197.07 448 320 448c26.91 0 52.87-4 77.89-10.46L346 397.39a144.13 144.13 0 0 1-26 2.61zm313.82 58.1l-110.55-85.44a331.25 331.25 0 0 0 81.25-102.07 32.35 32.35 0 0 0 0-29.19C550.29 135.59 442.93 64 320 64a308.15 308.15 0 0 0-147.32 37.7L45.46 3.37A16 16 0 0 0 23 6.18L3.37 31.45A16 16 0 0 0 6.18 53.9l588.36 454.730a16 16 0 0 0 22.46-2.81l19.64-25.27a16 16 0 0 0-2.82-22.45zm-183.72-142l-39.3-30.38A94.75 94.75 0 0 0 416 256a94.76 94.76 0 0 0-121.31-92.21A47.65 47.65 0 0 1 304 192a46.64 46.64 0 0 1-1.54 10l-73.610-56.89A142.31 142.31 0 0 1 320 112a143.92 143.92 0 0 1 144 144c0 21.630-5.29 41.79-13.9 60.11z" fill="#6c757d"/></svg>
<span style="margin-top:1px">Infos</span></div>
<div style="position:absolute;left:775px;top:348px;width:340px;height:43px;border:1px solid #6c757d;border-radius:6px;background:#fff"></div>
<div style="position:absolute;left:775px;top:348px;width:296px;height:45px;display:flex;align-items:center;justify-content:center;color:#6c757d;font:17px/1 'Liberation Sans',sans-serif;letter-spacing:0px;white-space:nowrap">
<span style="display:inline-block;width:15px;height:15px;border-radius:2px;background:#6c757d;margin-right:6px;margin-top:1px"></span>
<span style="margin-top:1px">Check Text Spacing</span></div>
<div style="position:absolute;left:1065.9px;top:357.0px;width:27px;height:27px;border-radius:50%;background:#6c757d"></div>
<div style="position:absolute;left:1074.4px;top:363.5px;width:10px;height:14px;"><div style="position:absolute;left:3.5px;top:0;width:3.2px;height:3.2px;border-radius:50%;background:#fff"></div><div style="position:absolute;left:1.5px;top:5px;width:5.2px;height:2.4px;background:#fff"></div><div style="position:absolute;left:3.5px;top:5px;width:3.2px;height:8px;background:#fff"></div><div style="position:absolute;left:1.5px;top:11.2px;width:7.2px;height:2.4px;background:#fff"></div></div>
<div style="position:absolute;left:775px;top:397px;width:340px;height:43px;border:1px solid #6c757d;border-radius:6px;background:#fff"></div>
<div style="position:absolute;left:775px;top:397px;width:296px;height:45px;display:flex;align-items:center;justify-content:center;color:#6c757d;font:17px/1 'Liberation Sans',sans-serif;letter-spacing:0px;white-space:nowrap">
<span style="display:inline-block;width:15px;height:15px;border-radius:2px;background:#6c757d;margin-right:6px;margin-top:1px"></span>
<span style="margin-top:1px">Check Page Reflow</span></div>
<div style="position:absolute;left:1065.9px;top:406.0px;width:27px;height:27px;border-radius:50%;background:#6c757d"></div>
<div style="position:absolute;left:1074.4px;top:412.5px;width:10px;height:14px;"><div style="position:absolute;left:3.5px;top:0;width:3.2px;height:3.2px;border-radius:50%;background:#fff"></div><div style="position:absolute;left:1.5px;top:5px;width:5.2px;height:2.4px;background:#fff"></div><div style="position:absolute;left:3.5px;top:5px;width:3.2px;height:8px;background:#fff"></div><div style="position:absolute;left:1.5px;top:11.2px;width:7.2px;height:2.4px;background:#fff"></div></div>
<div style="position:absolute;left:775px;top:455px;width:117px;height:41px;border:1px solid #6c757d;border-radius:6px;background:#fff"></div>
<div style="position:absolute;left:775px;top:455px;width:119px;height:43px;display:flex;align-items:center;justify-content:center;color:#6c757d;font:17px/1 'Liberation Sans',sans-serif;letter-spacing:0px;white-space:nowrap">
<svg width="22.5" height="18" viewBox="0 0 640 512" style="margin-right:6px;margin-top:1px"><path d="M320 400c-75.85 0-137.25-58.71-142.9-133.11L72.2 185.82c-13.79 17.3-26.48 35.59-36.72 55.59a32.35 32.35 0 0 0 0 29.19C89.71 376.41 197.07 448 320 448c26.91 0 52.87-4 77.89-10.46L346 397.39a144.13 144.13 0 0 1-26 2.61zm313.82 58.1l-110.55-85.44a331.25 331.25 0 0 0 81.25-102.07 32.35 32.35 0 0 0 0-29.19C550.29 135.59 442.93 64 320 64a308.15 308.15 0 0 0-147.32 37.7L45.46 3.37A16 16 0 0 0 23 6.18L3.37 31.45A16 16 0 0 0 6.18 53.9l588.36 454.730a16 16 0 0 0 22.46-2.81l19.64-25.27a16 16 0 0 0-2.82-22.45zm-183.72-142l-39.3-30.38A94.75 94.75 0 0 0 416 256a94.76 94.76 0 0 0-121.31-92.21A47.65 47.65 0 0 1 304 192a46.64 46.64 0 0 1-1.54 10l-73.610-56.89A142.31 142.31 0 0 1 320 112a143.92 143.92 0 0 1 144 144c0 21.630-5.29 41.79-13.9 60.11z" fill="#6c757d"/></svg>
<span style="margin-top:1px">Images</span></div>
<div style="position:absolute;left:898px;top:455px;width:217px;height:41px;border:1px solid #6c757d;border-radius:6px;background:#fff"></div>
<div style="position:absolute;left:898px;top:455px;width:219px;height:43px;display:flex;align-items:center;justify-content:center;color:#6c757d;font:17px/1 'Liberation Sans',sans-serif;letter-spacing:0px;white-space:nowrap">
<svg width="22.5" height="18" viewBox="0 0 640 512" style="margin-right:6px;margin-top:1px"><path d="M320 400c-75.85 0-137.25-58.71-142.9-133.11L72.2 185.82c-13.79 17.3-26.48 35.59-36.72 55.59a32.35 32.35 0 0 0 0 29.19C89.71 376.41 197.07 448 320 448c26.91 0 52.87-4 77.89-10.46L346 397.39a144.13 144.13 0 0 1-26 2.61zm313.82 58.1l-110.55-85.44a331.25 331.25 0 0 0 81.25-102.07 32.35 32.35 0 0 0 0-29.19C550.29 135.59 442.93 64 320 64a308.15 308.15 0 0 0-147.32 37.7L45.46 3.37A16 16 0 0 0 23 6.18L3.37 31.45A16 16 0 0 0 6.18 53.9l588.36 454.730a16 16 0 0 0 22.46-2.81l19.64-25.27a16 16 0 0 0-2.82-22.45zm-183.72-142l-39.3-30.38A94.75 94.75 0 0 0 416 256a94.76 94.76 0 0 0-121.31-92.21A47.65 47.65 0 0 1 304 192a46.64 46.64 0 0 1-1.54 10l-73.610-56.89A142.31 142.31 0 0 1 320 112a143.92 143.92 0 0 1 144 144c0 21.630-5.29 41.79-13.9 60.11z" fill="#6c757d"/></svg>
<span style="margin-top:1px">Background images</span></div>
<div style="position:absolute;left:775px;top:502px;width:340px;height:40px;border:1px solid #6c757d;border-radius:6px;background:#fff"></div>
<div style="position:absolute;left:775px;top:502px;width:342px;height:42px;display:flex;align-items:center;justify-content:center;color:#6c757d;font:17px/1 'Liberation Sans',sans-serif;letter-spacing:0px;white-space:nowrap">
<svg width="22.5" height="18" viewBox="0 0 640 512" style="margin-right:6px;margin-top:1px"><path d="M320 400c-75.85 0-137.25-58.71-142.9-133.11L72.2 185.82c-13.79 17.3-26.48 35.59-36.72 55.59a32.35 32.35 0 0 0 0 29.19C89.71 376.41 197.07 448 320 448c26.91 0 52.87-4 77.89-10.46L346 397.39a144.13 144.13 0 0 1-26 2.61zm313.82 58.1l-110.55-85.44a331.25 331.25 0 0 0 81.25-102.07 32.35 32.35 0 0 0 0-29.19C550.29 135.59 442.93 64 320 64a308.15 308.15 0 0 0-147.32 37.7L45.46 3.37A16 16 0 0 0 23 6.18L3.37 31.45A16 16 0 0 0 6.18 53.9l588.36 454.730a16 16 0 0 0 22.46-2.81l19.64-25.27a16 16 0 0 0-2.82-22.45zm-183.72-142l-39.3-30.38A94.75 94.75 0 0 0 416 256a94.76 94.76 0 0 0-121.31-92.21A47.65 47.65 0 0 1 304 192a46.64 46.64 0 0 1-1.54 10l-73.610-56.89A142.31 142.31 0 0 1 320 112a143.92 143.92 0 0 1 144 144c0 21.630-5.29 41.79-13.9 60.11z" fill="#6c757d"/></svg>
<span style="margin-top:1px">Rich Media</span></div>
<div style="position:absolute;left:775px;top:558px;width:162px;height:40px;border:1px solid #6c757d;border-radius:6px;background:#fff"></div>
<div style="position:absolute;left:775px;top:558px;width:164px;height:42px;display:flex;align-items:center;justify-content:center;color:#6c757d;font:17px/1 'Liberation Sans',sans-serif;letter-spacing:0px;white-space:nowrap">
<svg width="22.5" height="18" viewBox="0 0 640 512" style="margin-right:6px;margin-top:1px"><path d="M320 400c-75.85 0-137.25-58.71-142.9-133.11L72.2 185.82c-13.79 17.3-26.48 35.59-36.72 55.59a32.35 32.35 0 0 0 0 29.19C89.71 376.41 197.07 448 320 448c26.91 0 52.87-4 77.89-10.46L346 397.39a144.13 144.13 0 0 1-26 2.61zm313.82 58.1l-110.55-85.44a331.25 331.25 0 0 0 81.25-102.07 32.35 32.35 0 0 0 0-29.19C550.29 135.59 442.93 64 320 64a308.15 308.15 0 0 0-147.32 37.7L45.46 3.37A16 16 0 0 0 23 6.18L3.37 31.45A16 16 0 0 0 6.18 53.9l588.36 454.730a16 16 0 0 0 22.46-2.81l19.64-25.27a16 16 0 0 0-2.82-22.45zm-183.72-142l-39.3-30.38A94.75 94.75 0 0 0 416 256a94.76 94.76 0 0 0-121.31-92.21A47.65 47.65 0 0 1 304 192a46.64 46.64 0 0 1-1.54 10l-73.610-56.89A142.31 142.31 0 0 1 320 112a143.92 143.92 0 0 1 144 144c0 21.630-5.29 41.79-13.9 60.11z" fill="#6c757d"/></svg>
<span style="margin-top:1px">Headings</span></div>
<div style="position:absolute;left:939px;top:554px;width:182px;height:50px;border-radius:9px;background:#9fc3e4"></div>
<div style="position:absolute;left:943px;top:558px;width:174px;height:42px;border-radius:6px;background:#1a62a2"></div>
<div style="position:absolute;left:943px;top:558px;width:174px;height:42px;display:flex;align-items:center;justify-content:center;color:#fff;font:17px/1 'Liberation Sans',sans-serif;letter-spacing:0px;white-space:nowrap">
<svg width="20.3" height="18" viewBox="0 0 576 512" style="margin-right:6px;margin-top:1px"><path d="M572.52 241.4C518.29 135.59 410.93 64 288 64S57.68 135.64 3.48 241.41a32.35 32.35 0 0 0 0 29.19C57.71 376.41 165.070 448 288 448s230.32-71.64 284.52-177.41a32.35 32.35 0 0 0 0-29.19zM288 400a144 144 0 1 1 144-144 143.93 143.93 0 0 1-144 144zm0-240a95.31 95.31 0 0 0-25.31 3.79 47.85 47.85 0 0 1-66.9 66.9A95.78 95.78 0 1 0 288 160z" fill="#fff"/></svg>
<span style="margin-top:1px">Landmarks</span></div>
<div style="position:absolute;left:775px;top:604px;width:100px;height:40px;border:1px solid #6c757d;border-radius:6px;background:#fff"></div>
<div style="position:absolute;left:775px;top:604px;width:102px;height:42px;display:flex;align-items:center;justify-content:center;color:#6c757d;font:17px/1 'Liberation Sans',sans-serif;letter-spacing:0px;white-space:nowrap">
<svg width="22.5" height="18" viewBox="0 0 640 512" style="margin-right:6px;margin-top:1px"><path d="M320 400c-75.85 0-137.25-58.71-142.9-133.11L72.2 185.82c-13.79 17.3-26.48 35.59-36.72 55.59a32.35 32.35 0 0 0 0 29.19C89.71 376.41 197.07 448 320 448c26.91 0 52.87-4 77.89-10.46L346 397.39a144.13 144.13 0 0 1-26 2.61zm313.82 58.1l-110.55-85.44a331.25 331.25 0 0 0 81.25-102.07 32.35 32.35 0 0 0 0-29.19C550.29 135.59 442.93 64 320 64a308.15 308.15 0 0 0-147.32 37.7L45.46 3.37A16 16 0 0 0 23 6.18L3.37 31.45A16 16 0 0 0 6.18 53.9l588.36 454.730a16 16 0 0 0 22.46-2.81l19.64-25.27a16 16 0 0 0-2.82-22.45zm-183.72-142l-39.3-30.38A94.75 94.75 0 0 0 416 256a94.76 94.76 0 0 0-121.31-92.21A47.65 47.65 0 0 1 304 192a46.64 46.64 0 0 1-1.54 10l-73.610-56.89A142.31 142.31 0 0 1 320 112a143.92 143.92 0 0 1 144 144c0 21.630-5.29 41.79-13.9 60.11z" fill="#6c757d"/></svg>
<span style="margin-top:1px">Lists</span></div>
<div style="position:absolute;left:880px;top:604px;width:115px;height:40px;border:1px solid #6c757d;border-radius:6px;background:#fff"></div>
<div style="position:absolute;left:880px;top:604px;width:117px;height:42px;display:flex;align-items:center;justify-content:center;color:#6c757d;font:17px/1 'Liberation Sans',sans-serif;letter-spacing:0px;white-space:nowrap">
<svg width="22.5" height="18" viewBox="0 0 640 512" style="margin-right:6px;margin-top:1px"><path d="M320 400c-75.85 0-137.25-58.71-142.9-133.11L72.2 185.82c-13.79 17.3-26.48 35.59-36.72 55.59a32.35 32.35 0 0 0 0 29.19C89.71 376.41 197.07 448 320 448c26.91 0 52.87-4 77.89-10.46L346 397.39a144.13 144.13 0 0 1-26 2.61zm313.82 58.1l-110.55-85.44a331.25 331.25 0 0 0 81.25-102.07 32.35 32.35 0 0 0 0-29.19C550.29 135.59 442.93 64 320 64a308.15 308.15 0 0 0-147.32 37.7L45.46 3.37A16 16 0 0 0 23 6.18L3.37 31.45A16 16 0 0 0 6.18 53.9l588.36 454.730a16 16 0 0 0 22.46-2.81l19.64-25.27a16 16 0 0 0-2.82-22.45zm-183.72-142l-39.3-30.38A94.75 94.75 0 0 0 416 256a94.76 94.76 0 0 0-121.31-92.21A47.65 47.65 0 0 1 304 192a46.64 46.64 0 0 1-1.54 10l-73.610-56.89A142.31 142.31 0 0 1 320 112a143.92 143.92 0 0 1 144 144c0 21.630-5.29 41.79-13.9 60.11z" fill="#6c757d"/></svg>
<span style="margin-top:1px">Tables</span></div>
<div style="position:absolute;left:1000px;top:604px;width:115px;height:40px;border:1px solid #6c757d;border-radius:6px;background:#fff"></div>
<div style="position:absolute;left:1000px;top:604px;width:117px;height:42px;display:flex;align-items:center;justify-content:center;color:#6c757d;font:17px/1 'Liberation Sans',sans-serif;letter-spacing:0px;white-space:nowrap">
<svg width="22.5" height="18" viewBox="0 0 640 512" style="margin-right:6px;margin-top:1px"><path d="M320 400c-75.85 0-137.25-58.71-142.9-133.11L72.2 185.82c-13.79 17.3-26.48 35.59-36.72 55.59a32.35 32.35 0 0 0 0 29.19C89.71 376.41 197.07 448 320 448c26.91 0 52.87-4 77.89-10.46L346 397.39a144.13 144.13 0 0 1-26 2.61zm313.82 58.1l-110.55-85.44a331.25 331.25 0 0 0 81.25-102.07 32.35 32.35 0 0 0 0-29.19C550.29 135.59 442.93 64 320 64a308.15 308.15 0 0 0-147.32 37.7L45.46 3.37A16 16 0 0 0 23 6.18L3.37 31.45A16 16 0 0 0 6.18 53.9l588.36 454.730a16 16 0 0 0 22.46-2.81l19.64-25.27a16 16 0 0 0-2.82-22.45zm-183.72-142l-39.3-30.38A94.75 94.75 0 0 0 416 256a94.76 94.76 0 0 0-121.31-92.21A47.65 47.65 0 0 1 304 192a46.64 46.64 0 0 1-1.54 10l-73.610-56.89A142.31 142.31 0 0 1 320 112a143.92 143.92 0 0 1 144 144c0 21.630-5.29 41.79-13.9 60.11z" fill="#6c757d"/></svg>
<span style="margin-top:1px">Forms</span></div>
<div style="position:absolute;left:775px;top:650px;width:175px;height:40px;border:1px solid #6c757d;border-radius:6px;background:#fff"></div>
<div style="position:absolute;left:775px;top:650px;width:177px;height:42px;display:flex;align-items:center;justify-content:center;color:#6c757d;font:17px/1 'Liberation Sans',sans-serif;letter-spacing:0px;white-space:nowrap">
<svg width="22.5" height="18" viewBox="0 0 640 512" style="margin-right:6px;margin-top:1px"><path d="M320 400c-75.85 0-137.25-58.71-142.9-133.11L72.2 185.82c-13.79 17.3-26.48 35.59-36.72 55.59a32.35 32.35 0 0 0 0 29.19C89.71 376.41 197.07 448 320 448c26.91 0 52.87-4 77.89-10.46L346 397.39a144.13 144.13 0 0 1-26 2.61zm313.82 58.1l-110.55-85.44a331.25 331.25 0 0 0 81.25-102.07 32.35 32.35 0 0 0 0-29.19C550.29 135.59 442.93 64 320 64a308.15 308.15 0 0 0-147.32 37.7L45.46 3.37A16 16 0 0 0 23 6.18L3.37 31.45A16 16 0 0 0 6.18 53.9l588.36 454.730a16 16 0 0 0 22.46-2.81l19.64-25.27a16 16 0 0 0-2.82-22.45zm-183.72-142l-39.3-30.38A94.75 94.75 0 0 0 416 256a94.76 94.76 0 0 0-121.31-92.21A47.65 47.65 0 0 1 304 192a46.64 46.64 0 0 1-1.54 10l-73.610-56.89A142.31 142.31 0 0 1 320 112a143.92 143.92 0 0 1 144 144c0 21.630-5.29 41.79-13.9 60.11z" fill="#6c757d"/></svg>
<span style="margin-top:1px">Frames</span></div>
<div style="position:absolute;left:955px;top:650px;width:160px;height:40px;border:1px solid #6c757d;border-radius:6px;background:#fff"></div>
<div style="position:absolute;left:955px;top:650px;width:162px;height:42px;display:flex;align-items:center;justify-content:center;color:#6c757d;font:17px/1 'Liberation Sans',sans-serif;letter-spacing:0px;white-space:nowrap">
<svg width="22.5" height="18" viewBox="0 0 640 512" style="margin-right:6px;margin-top:1px"><path d="M320 400c-75.85 0-137.25-58.71-142.9-133.11L72.2 185.82c-13.79 17.3-26.48 35.59-36.72 55.59a32.35 32.35 0 0 0 0 29.19C89.71 376.41 197.07 448 320 448c26.91 0 52.87-4 77.89-10.46L346 397.39a144.13 144.13 0 0 1-26 2.61zm313.82 58.1l-110.55-85.44a331.25 331.25 0 0 0 81.25-102.07 32.35 32.35 0 0 0 0-29.19C550.29 135.59 442.93 64 320 64a308.15 308.15 0 0 0-147.32 37.7L45.46 3.37A16 16 0 0 0 23 6.18L3.37 31.45A16 16 0 0 0 6.18 53.9l588.36 454.730a16 16 0 0 0 22.46-2.81l19.64-25.27a16 16 0 0 0-2.82-22.45zm-183.72-142l-39.3-30.38A94.75 94.75 0 0 0 416 256a94.76 94.76 0 0 0-121.31-92.21A47.65 47.65 0 0 1 304 192a46.64 46.64 0 0 1-1.54 10l-73.610-56.89A142.31 142.31 0 0 1 320 112a143.92 143.92 0 0 1 144 144c0 21.630-5.29 41.79-13.9 60.11z" fill="#6c757d"/></svg>
<span style="margin-top:1px">Titles</span></div>
<div style="position:absolute;left:775px;top:696px;width:340px;height:40px;border:1px solid #6c757d;border-radius:6px;background:#fff"></div>
<div style="position:absolute;left:775px;top:696px;width:342px;height:42px;display:flex;align-items:center;justify-content:center;color:#6c757d;font:17px/1 'Liberation Sans',sans-serif;letter-spacing:0px;white-space:nowrap">
<svg width="22.5" height="18" viewBox="0 0 640 512" style="margin-right:6px;margin-top:1px"><path d="M320 400c-75.85 0-137.25-58.71-142.9-133.11L72.2 185.82c-13.79 17.3-26.48 35.59-36.72 55.59a32.35 32.35 0 0 0 0 29.19C89.71 376.41 197.07 448 320 448c26.91 0 52.87-4 77.89-10.46L346 397.39a144.13 144.13 0 0 1-26 2.61zm313.82 58.1l-110.55-85.44a331.25 331.25 0 0 0 81.25-102.07 32.35 32.35 0 0 0 0-29.19C550.29 135.59 442.93 64 320 64a308.15 308.15 0 0 0-147.32 37.7L45.46 3.37A16 16 0 0 0 23 6.18L3.37 31.45A16 16 0 0 0 6.18 53.9l588.36 454.730a16 16 0 0 0 22.46-2.81l19.64-25.27a16 16 0 0 0-2.82-22.45zm-183.72-142l-39.3-30.38A94.75 94.75 0 0 0 416 256a94.76 94.76 0 0 0-121.31-92.21A47.65 47.65 0 0 1 304 192a46.64 46.64 0 0 1-1.54 10l-73.610-56.89A142.31 142.31 0 0 1 320 112a143.92 143.92 0 0 1 144 144c0 21.630-5.29 41.79-13.9 60.11z" fill="#6c757d"/></svg>
<span style="margin-top:1px">Languages</span></div>
<div style="position:absolute;left:775px;top:752px;width:178px;height:40px;border:1px solid #6c757d;border-radius:6px;background:#fff"></div>
<div style="position:absolute;left:775px;top:752px;width:180px;height:42px;display:flex;align-items:center;justify-content:center;color:#6c757d;font:17px/1 'Liberation Sans',sans-serif;letter-spacing:0px;white-space:nowrap">
<svg width="22.5" height="18" viewBox="0 0 640 512" style="margin-right:6px;margin-top:1px"><path d="M320 400c-75.85 0-137.25-58.71-142.9-133.11L72.2 185.82c-13.79 17.3-26.48 35.59-36.72 55.59a32.35 32.35 0 0 0 0 29.19C89.71 376.41 197.07 448 320 448c26.91 0 52.87-4 77.89-10.46L346 397.39a144.13 144.13 0 0 1-26 2.61zm313.82 58.1l-110.55-85.44a331.25 331.25 0 0 0 81.25-102.07 32.35 32.35 0 0 0 0-29.19C550.29 135.59 442.93 64 320 64a308.15 308.15 0 0 0-147.32 37.7L45.46 3.37A16 16 0 0 0 23 6.18L3.37 31.45A16 16 0 0 0 6.18 53.9l588.36 454.730a16 16 0 0 0 22.46-2.81l19.64-25.27a16 16 0 0 0-2.82-22.45zm-183.72-142l-39.3-30.38A94.75 94.75 0 0 0 416 256a94.76 94.76 0 0 0-121.31-92.21A47.65 47.65 0 0 1 304 192a46.64 46.64 0 0 1-1.54 10l-73.610-56.89A142.31 142.31 0 0 1 320 112a143.92 143.92 0 0 1 144 144c0 21.630-5.29 41.79-13.9 60.11z" fill="#6c757d"/></svg>
<span style="margin-top:1px">Buttons</span></div>
<div style="position:absolute;left:958px;top:752px;width:157px;height:40px;border:1px solid #6c757d;border-radius:6px;background:#fff"></div>
<div style="position:absolute;left:958px;top:752px;width:159px;height:42px;display:flex;align-items:center;justify-content:center;color:#6c757d;font:17px/1 'Liberation Sans',sans-serif;letter-spacing:0px;white-space:nowrap">
<svg width="22.5" height="18" viewBox="0 0 640 512" style="margin-right:6px;margin-top:1px"><path d="M320 400c-75.85 0-137.25-58.71-142.9-133.11L72.2 185.82c-13.79 17.3-26.48 35.59-36.72 55.59a32.35 32.35 0 0 0 0 29.19C89.71 376.41 197.07 448 320 448c26.91 0 52.87-4 77.89-10.46L346 397.39a144.13 144.13 0 0 1-26 2.61zm313.82 58.1l-110.55-85.44a331.25 331.25 0 0 0 81.25-102.07 32.35 32.35 0 0 0 0-29.19C550.29 135.59 442.93 64 320 64a308.15 308.15 0 0 0-147.32 37.7L45.46 3.37A16 16 0 0 0 23 6.18L3.37 31.45A16 16 0 0 0 6.18 53.9l588.36 454.730a16 16 0 0 0 22.46-2.81l19.64-25.27a16 16 0 0 0-2.82-22.45zm-183.72-142l-39.3-30.38A94.75 94.75 0 0 0 416 256a94.76 94.76 0 0 0-121.31-92.21A47.65 47.65 0 0 1 304 192a46.64 46.64 0 0 1-1.54 10l-73.610-56.89A142.31 142.31 0 0 1 320 112a143.92 143.92 0 0 1 144 144c0 21.630-5.29 41.79-13.9 60.11z" fill="#6c757d"/></svg>
<span style="margin-top:1px">Links</span></div>
<div style="position:absolute;left:775px;top:798px;width:170px;height:41px;border:1px solid #6c757d;border-radius:6px;background:#fff"></div>
<div style="position:absolute;left:775px;top:798px;width:172px;height:43px;display:flex;align-items:center;justify-content:center;color:#6c757d;font:17px/1 'Liberation Sans',sans-serif;letter-spacing:0px;white-space:nowrap">
<svg width="22.5" height="18" viewBox="0 0 640 512" style="margin-right:6px;margin-top:1px"><path d="M320 400c-75.85 0-137.25-58.71-142.9-133.11L72.2 185.82c-13.79 17.3-26.48 35.59-36.72 55.59a32.35 32.35 0 0 0 0 29.19C89.71 376.41 197.07 448 320 448c26.91 0 52.87-4 77.89-10.46L346 397.39a144.13 144.13 0 0 1-26 2.61zm313.82 58.1l-110.55-85.44a331.25 331.25 0 0 0 81.25-102.07 32.35 32.35 0 0 0 0-29.19C550.29 135.59 442.93 64 320 64a308.15 308.15 0 0 0-147.32 37.7L45.46 3.37A16 16 0 0 0 23 6.18L3.37 31.45A16 16 0 0 0 6.18 53.9l588.36 454.730a16 16 0 0 0 22.46-2.81l19.64-25.27a16 16 0 0 0-2.82-22.45zm-183.72-142l-39.3-30.38A94.75 94.75 0 0 0 416 256a94.76 94.76 0 0 0-121.31-92.21A47.65 47.65 0 0 1 304 192a46.64 46.64 0 0 1-1.54 10l-73.610-56.89A142.31 142.31 0 0 1 320 112a143.92 143.92 0 0 1 144 144c0 21.630-5.29 41.79-13.9 60.11z" fill="#6c757d"/></svg>
<span style="margin-top:1px">Tab order</span></div>
<div style="position:absolute;left:951px;top:798px;width:164px;height:41px;border:1px solid #6c757d;border-radius:6px;background:#fff"></div>
<div style="position:absolute;left:951px;top:798px;width:166px;height:43px;display:flex;align-items:center;justify-content:center;color:#6c757d;font:17px/1 'Liberation Sans',sans-serif;letter-spacing:0px;white-space:nowrap">
<svg width="22.5" height="18" viewBox="0 0 640 512" style="margin-right:6px;margin-top:1px"><path d="M320 400c-75.85 0-137.25-58.71-142.9-133.11L72.2 185.82c-13.79 17.3-26.48 35.59-36.72 55.59a32.35 32.35 0 0 0 0 29.19C89.71 376.41 197.07 448 320 448c26.91 0 52.87-4 77.89-10.46L346 397.39a144.13 144.13 0 0 1-26 2.61zm313.82 58.1l-110.55-85.44a331.25 331.25 0 0 0 81.25-102.07 32.35 32.35 0 0 0 0-29.19C550.29 135.59 442.93 64 320 64a308.15 308.15 0 0 0-147.32 37.7L45.46 3.37A16 16 0 0 0 23 6.18L3.37 31.45A16 16 0 0 0 6.18 53.9l588.36 454.730a16 16 0 0 0 22.46-2.81l19.64-25.27a16 16 0 0 0-2.82-22.45zm-183.72-142l-39.3-30.38A94.75 94.75 0 0 0 416 256a94.76 94.76 0 0 0-121.31-92.21A47.65 47.65 0 0 1 304 192a46.64 46.64 0 0 1-1.54 10l-73.610-56.89A142.31 142.31 0 0 1 320 112a143.92 143.92 0 0 1 144 144c0 21.630-5.29 41.79-13.9 60.11z" fill="#6c757d"/></svg>
<span style="margin-top:1px">tabindex</span></div>
<div style="position:absolute;left:775px;top:844px;width:340px;height:41px;border:1px solid #6c757d;border-radius:6px;background:#fff"></div>
<div style="position:absolute;left:775px;top:844px;width:342px;height:43px;display:flex;align-items:center;justify-content:center;color:#6c757d;font:17px/1 'Liberation Sans',sans-serif;letter-spacing:0px;white-space:nowrap">
<svg width="22.5" height="18" viewBox="0 0 640 512" style="margin-right:6px;margin-top:1px"><path d="M320 400c-75.85 0-137.25-58.71-142.9-133.11L72.2 185.82c-13.79 17.3-26.48 35.59-36.72 55.59a32.35 32.35 0 0 0 0 29.19C89.71 376.41 197.07 448 320 448c26.91 0 52.87-4 77.89-10.46L346 397.39a144.13 144.13 0 0 1-26 2.61zm313.82 58.1l-110.55-85.44a331.25 331.25 0 0 0 81.25-102.07 32.35 32.35 0 0 0 0-29.19C550.29 135.59 442.93 64 320 64a308.15 308.15 0 0 0-147.32 37.7L45.46 3.37A16 16 0 0 0 23 6.18L3.37 31.45A16 16 0 0 0 6.18 53.9l588.36 454.730a16 16 0 0 0 22.46-2.81l19.64-25.27a16 16 0 0 0-2.82-22.45zm-183.72-142l-39.3-30.38A94.75 94.75 0 0 0 416 256a94.76 94.76 0 0 0-121.31-92.21A47.65 47.65 0 0 1 304 192a46.64 46.64 0 0 1-1.54 10l-73.610-56.89A142.31 142.31 0 0 1 320 112a143.92 143.92 0 0 1 144 144c0 21.630-5.29 41.79-13.9 60.11z" fill="#6c757d"/></svg>
<span style="margin-top:1px">Access keys</span></div>
<div style="position:absolute;left:775px;top:900px;width:178px;height:41px;border:1px solid #6c757d;border-radius:6px;background:#fff"></div>
<div style="position:absolute;left:775px;top:900px;width:180px;height:43px;display:flex;align-items:center;justify-content:center;color:#6c757d;font:17px/1 'Liberation Sans',sans-serif;letter-spacing:0px;white-space:nowrap">
<svg width="22.5" height="18" viewBox="0 0 640 512" style="margin-right:6px;margin-top:1px"><path d="M320 400c-75.85 0-137.25-58.71-142.9-133.11L72.2 185.82c-13.79 17.3-26.48 35.59-36.72 55.59a32.35 32.35 0 0 0 0 29.19C89.71 376.41 197.07 448 320 448c26.91 0 52.87-4 77.89-10.46L346 397.39a144.13 144.13 0 0 1-26 2.61zm313.82 58.1l-110.55-85.44a331.25 331.25 0 0 0 81.25-102.07 32.35 32.35 0 0 0 0-29.19C550.29 135.59 442.93 64 320 64a308.15 308.15 0 0 0-147.32 37.7L45.46 3.37A16 16 0 0 0 23 6.18L3.37 31.45A16 16 0 0 0 6.18 53.9l588.36 454.730a16 16 0 0 0 22.46-2.81l19.64-25.27a16 16 0 0 0-2.82-22.45zm-183.72-142l-39.3-30.38A94.75 94.75 0 0 0 416 256a94.76 94.76 0 0 0-121.31-92.21A47.65 47.65 0 0 1 304 192a46.64 46.64 0 0 1-1.54 10l-73.610-56.89A142.31 142.31 0 0 1 320 112a143.92 143.92 0 0 1 144 144c0 21.630-5.29 41.79-13.9 60.11z" fill="#6c757d"/></svg>
<span style="margin-top:1px">ARIA Usage</span></div>
<div style="position:absolute;left:959px;top:900px;width:156px;height:41px;border:1px solid #6c757d;border-radius:6px;background:#fff"></div>
<div style="position:absolute;left:959px;top:900px;width:158px;height:43px;display:flex;align-items:center;justify-content:center;color:#6c757d;font:17px/1 'Liberation Sans',sans-serif;letter-spacing:0px;white-space:nowrap">
<svg width="22.5" height="18" viewBox="0 0 640 512" style="margin-right:6px;margin-top:1px"><path d="M320 400c-75.85 0-137.25-58.71-142.9-133.11L72.2 185.82c-13.79 17.3-26.48 35.59-36.72 55.59a32.35 32.35 0 0 0 0 29.19C89.71 376.41 197.07 448 320 448c26.91 0 52.87-4 77.89-10.46L346 397.39a144.13 144.13 0 0 1-26 2.61zm313.82 58.1l-110.55-85.44a331.25 331.25 0 0 0 81.25-102.07 32.35 32.35 0 0 0 0-29.19C550.29 135.59 442.93 64 320 64a308.15 308.15 0 0 0-147.32 37.7L45.46 3.37A16 16 0 0 0 23 6.18L3.37 31.45A16 16 0 0 0 6.18 53.9l588.36 454.730a16 16 0 0 0 22.46-2.81l19.64-25.27a16 16 0 0 0-2.82-22.45zm-183.72-142l-39.3-30.38A94.75 94.75 0 0 0 416 256a94.76 94.76 0 0 0-121.31-92.21A47.65 47.65 0 0 1 304 192a46.64 46.64 0 0 1-1.54 10l-73.610-56.89A142.31 142.31 0 0 1 320 112a143.92 143.92 0 0 1 144 144c0 21.630-5.29 41.79-13.9 60.11z" fill="#6c757d"/></svg>
<span style="margin-top:1px">ARIA live</span></div>
<div style="position:absolute;left:1123px;top:137px;width:21px;height:809px;background:#f1f1f1"></div>
<div style="position:absolute;left:1125px;top:158px;width:17px;height:709px;background:#c1c1c1"></div>
<svg style="position:absolute;left:1128px;top:145px" width="11" height="7" viewBox="0 0 11 7"><path d="M0.5 6.5L5.5 0.5 10.5 6.5z" fill="#a3a3a3"/></svg>
<div style="position:absolute;left:1144px;top:137px;width:1px;height:809px;background:#d0d0d0"></div>
<div style="position:absolute;left:1145px;top:137px;width:570px;height:809px;background:#fff"></div>
<div style="position:absolute;left:1146.0px;top:142.1px;font:normal 33.5px/33.5px 'Liberation Sans',sans-serif;color:#212529;white-space:nowrap;letter-spacing:0.2px;-webkit-text-stroke:0.5px #212529">Landmarks</div>
<div style="position:absolute;left:1167px;top:191px;width:113px;height:26.5px;background:#1b75bc;border-radius:5px"></div>
<div style="position:absolute;left:1176.2px;top:197.4px;font:bold 17.5px/17.5px 'Liberation Sans',sans-serif;color:#fff;white-space:nowrap;letter-spacing:-0.3px">&lt;HEADER&gt;</div>
<div style="position:absolute;left:1154px;top:226px;width:45px;height:40px;border:1px solid #6c757d;border-radius:7px;background:#fff"></div>
<div style="position:absolute;left:1154px;top:277px;width:45px;height:40px;border:1px solid #6c757d;border-radius:7px;background:#fff"></div>
<svg style="position:absolute;left:1167px;top:236px" width="22" height="22" viewBox="0 0 22 22"><circle cx="9" cy="9.3" r="6.3" stroke="#6c757d" stroke-width="2.2" fill="none"/><path d="M13.6 14l5 5" stroke="#6c757d" stroke-width="2.4" stroke-linecap="round"/></svg>
<svg style="position:absolute;left:1171px;top:289px" width="13.6" height="18" viewBox="0 0 384 512"><path d="M384 112v352c0 26.51-21.49 48-48 48H48c-26.51 0-48-21.49-48-48V112c0-26.51 21.49-48 48-48h80c0-35.29 28.71-64 64-64s64 28.71 64 64h80c26.51 0 48 21.49 48 48zM192 40c-13.255 0-24 10.745-24 24s10.745 24 24 24 24-10.745 24-24-10.745-24-24-24m96 114v-20a6 6 0 0 0-6-6H102a6 6 0 0 0-6 6v20a6 6 0 0 0 6 6h180a6 6 0 0 0 6-6z" fill="#6c757d"/></svg>
<div style="position:absolute;left:1226.5px;top:247.2px;font:normal 14.8px/14.8px 'Liberation Mono',monospace;color:#e0231e;white-space:nowrap;">&lt;header <span style="color:#e0231e">class=</span><span style="color:#128a12">"header nav--opened"</span>&gt;&lt;/header&gt;</div>
<div style="position:absolute;left:1145px;top:332px;width:570px;height:1px;background:#000"></div>
<div style="position:absolute;left:1167px;top:337px;width:92px;height:26.5px;background:#1b75bc;border-radius:5px"></div>
<div style="position:absolute;left:1176.2px;top:343.4px;font:bold 17.5px/17.5px 'Liberation Sans',sans-serif;color:#fff;white-space:nowrap;letter-spacing:1.4px">&lt;MAIN&gt;</div>
<div style="position:absolute;left:1154px;top:372px;width:45px;height:40px;border:1px solid #6c757d;border-radius:7px;background:#fff"></div>
<div style="position:absolute;left:1154px;top:423px;width:45px;height:40px;border:1px solid #6c757d;border-radius:7px;background:#fff"></div>
<svg style="position:absolute;left:1167px;top:382px" width="22" height="22" viewBox="0 0 22 22"><circle cx="9" cy="9.3" r="6.3" stroke="#6c757d" stroke-width="2.2" fill="none"/><path d="M13.6 14l5 5" stroke="#6c757d" stroke-width="2.4" stroke-linecap="round"/></svg>
<svg style="position:absolute;left:1171px;top:435px" width="13.6" height="18" viewBox="0 0 384 512"><path d="M384 112v352c0 26.51-21.49 48-48 48H48c-26.51 0-48-21.49-48-48V112c0-26.51 21.49-48 48-48h80c0-35.29 28.71-64 64-64s64 28.71 64 64h80c26.51 0 48 21.49 48 48zM192 40c-13.255 0-24 10.745-24 24s10.745 24 24 24 24-10.745 24-24-10.745-24-24-24m96 114v-20a6 6 0 0 0-6-6H102a6 6 0 0 0-6 6v20a6 6 0 0 0 6 6h180a6 6 0 0 0 6-6z" fill="#6c757d"/></svg>
<div style="position:absolute;left:1226.5px;top:393.2px;font:normal 14.8px/14.8px 'Liberation Mono',monospace;color:#e0231e;white-space:nowrap;">&lt;main id=<span style="color:#128a12">"main-content"</span>&gt;&lt;/main&gt;</div>
<div style="position:absolute;left:1145px;top:478px;width:570px;height:1px;background:#000"></div>
<div style="position:absolute;left:1167px;top:483px;width:94px;height:26.5px;background:#1b75bc;border-radius:5px"></div>
<div style="position:absolute;left:1176.2px;top:489.4px;font:bold 17.5px/17.5px 'Liberation Sans',sans-serif;color:#fff;white-space:nowrap;letter-spacing:0.4px">&lt;ASIDE&gt;</div>
<div style="position:absolute;left:1154px;top:518px;width:45px;height:40px;border:1px solid #6c757d;border-radius:7px;background:#fff"></div>
<div style="position:absolute;left:1154px;top:569px;width:45px;height:40px;border:1px solid #6c757d;border-radius:7px;background:#fff"></div>
<svg style="position:absolute;left:1167px;top:528px" width="22" height="22" viewBox="0 0 22 22"><circle cx="9" cy="9.3" r="6.3" stroke="#6c757d" stroke-width="2.2" fill="none"/><path d="M13.6 14l5 5" stroke="#6c757d" stroke-width="2.4" stroke-linecap="round"/></svg>
<svg style="position:absolute;left:1171px;top:581px" width="13.6" height="18" viewBox="0 0 384 512"><path d="M384 112v352c0 26.51-21.49 48-48 48H48c-26.51 0-48-21.49-48-48V112c0-26.51 21.49-48 48-48h80c0-35.29 28.71-64 64-64s64 28.71 64 64h80c26.51 0 48 21.49 48 48zM192 40c-13.255 0-24 10.745-24 24s10.745 24 24 24 24-10.745 24-24-10.745-24-24-24m96 114v-20a6 6 0 0 0-6-6H102a6 6 0 0 0-6 6v20a6 6 0 0 0 6 6h180a6 6 0 0 0 6-6z" fill="#6c757d"/></svg>
<div style="position:absolute;left:1226.5px;top:539.2px;font:normal 14.8px/14.8px 'Liberation Mono',monospace;color:#e0231e;white-space:nowrap;">&lt;aside class=<span style="color:#128a12">"hero__section"</span>&gt;&lt;/aside&gt;</div>
<div style="position:absolute;left:1145px;top:624px;width:570px;height:1px;background:#000"></div>
<div style="position:absolute;left:1167px;top:629px;width:94px;height:26.5px;background:#1b75bc;border-radius:5px"></div>
<div style="position:absolute;left:1176.2px;top:635.4px;font:bold 17.5px/17.5px 'Liberation Sans',sans-serif;color:#fff;white-space:nowrap;letter-spacing:0.4px">&lt;ASIDE&gt;</div>
<div style="position:absolute;left:1154px;top:664px;width:45px;height:40px;border:1px solid #6c757d;border-radius:7px;background:#fff"></div>
<div style="position:absolute;left:1154px;top:715px;width:45px;height:40px;border:1px solid #6c757d;border-radius:7px;background:#fff"></div>
<svg style="position:absolute;left:1167px;top:674px" width="22" height="22" viewBox="0 0 22 22"><circle cx="9" cy="9.3" r="6.3" stroke="#6c757d" stroke-width="2.2" fill="none"/><path d="M13.6 14l5 5" stroke="#6c757d" stroke-width="2.4" stroke-linecap="round"/></svg>
<svg style="position:absolute;left:1171px;top:727px" width="13.6" height="18" viewBox="0 0 384 512"><path d="M384 112v352c0 26.51-21.49 48-48 48H48c-26.51 0-48-21.49-48-48V112c0-26.51 21.49-48 48-48h80c0-35.29 28.71-64 64-64s64 28.71 64 64h80c26.51 0 48 21.49 48 48zM192 40c-13.255 0-24 10.745-24 24s10.745 24 24 24 24-10.745 24-24-10.745-24-24-24m96 114v-20a6 6 0 0 0-6-6H102a6 6 0 0 0-6 6v20a6 6 0 0 0 6 6h180a6 6 0 0 0 6-6z" fill="#6c757d"/></svg>
<div style="position:absolute;left:1226.5px;top:685.2px;font:normal 14.8px/14.8px 'Liberation Mono',monospace;color:#e0231e;white-space:nowrap;">&lt;aside class=<span style="color:#128a12">"hero__section"</span>&gt;&lt;/aside&gt;</div>
<div style="position:absolute;left:1145px;top:770px;width:570px;height:1px;background:#000"></div>
<div style="position:absolute;left:1167px;top:775px;width:110px;height:26.5px;background:#1b75bc;border-radius:5px"></div>
<div style="position:absolute;left:1176.2px;top:781.4px;font:bold 17.5px/17.5px 'Liberation Sans',sans-serif;color:#fff;white-space:nowrap;letter-spacing:-0.2px">&lt;FOOTER&gt;</div>
<div style="position:absolute;left:1154px;top:810px;width:45px;height:40px;border:1px solid #6c757d;border-radius:7px;background:#fff"></div>
<div style="position:absolute;left:1154px;top:861px;width:45px;height:40px;border:1px solid #6c757d;border-radius:7px;background:#fff"></div>
<svg style="position:absolute;left:1167px;top:820px" width="22" height="22" viewBox="0 0 22 22"><circle cx="9" cy="9.3" r="6.3" stroke="#6c757d" stroke-width="2.2" fill="none"/><path d="M13.6 14l5 5" stroke="#6c757d" stroke-width="2.4" stroke-linecap="round"/></svg>
<svg style="position:absolute;left:1171px;top:873px" width="13.6" height="18" viewBox="0 0 384 512"><path d="M384 112v352c0 26.51-21.49 48-48 48H48c-26.51 0-48-21.49-48-48V112c0-26.51 21.49-48 48-48h80c0-35.29 28.71-64 64-64s64 28.71 64 64h80c26.51 0 48 21.49 48 48zM192 40c-13.255 0-24 10.745-24 24s10.745 24 24 24 24-10.745 24-24-10.745-24-24-24m96 114v-20a6 6 0 0 0-6-6H102a6 6 0 0 0-6 6v20a6 6 0 0 0 6 6h180a6 6 0 0 0 6-6z" fill="#6c757d"/></svg>
<div style="position:absolute;left:1226.5px;top:831.2px;font:normal 14.8px/14.8px 'Liberation Mono',monospace;color:#e0231e;white-space:nowrap;">&lt;footer class=<span style="color:#128a12">"footer"</span>&gt;&lt;/footer&gt;</div>
<div style="position:absolute;left:1145px;top:916px;width:570px;height:1px;background:#000"></div>
<div style="position:absolute;left:1145px;top:917px;width:570px;height:29px;background:#cdced1"></div>
<div style="position:absolute;left:1167px;top:920px;width:135px;height:30px;background:#1b75bc;border-radius:5px"></div>
<div style="position:absolute;left:1176.0px;top:927.2px;font:bold 17.5px/17.5px 'Liberation Sans',sans-serif;color:#fff;white-space:nowrap;letter-spacing:0.4px">&lt;DIV&gt;<span style="font-size:16.5px">[region]</span></div>
<div style="position:absolute;left:1320px;top:921px;width:134.5px;height:30px;background:#936010;border-radius:5px"></div>
<div style="position:absolute;left:1329.0px;top:928.5px;font:bold 16px/16px 'Liberation Sans',sans-serif;color:#fff;white-space:nowrap;">Visually hidden</div>
</body></html>
